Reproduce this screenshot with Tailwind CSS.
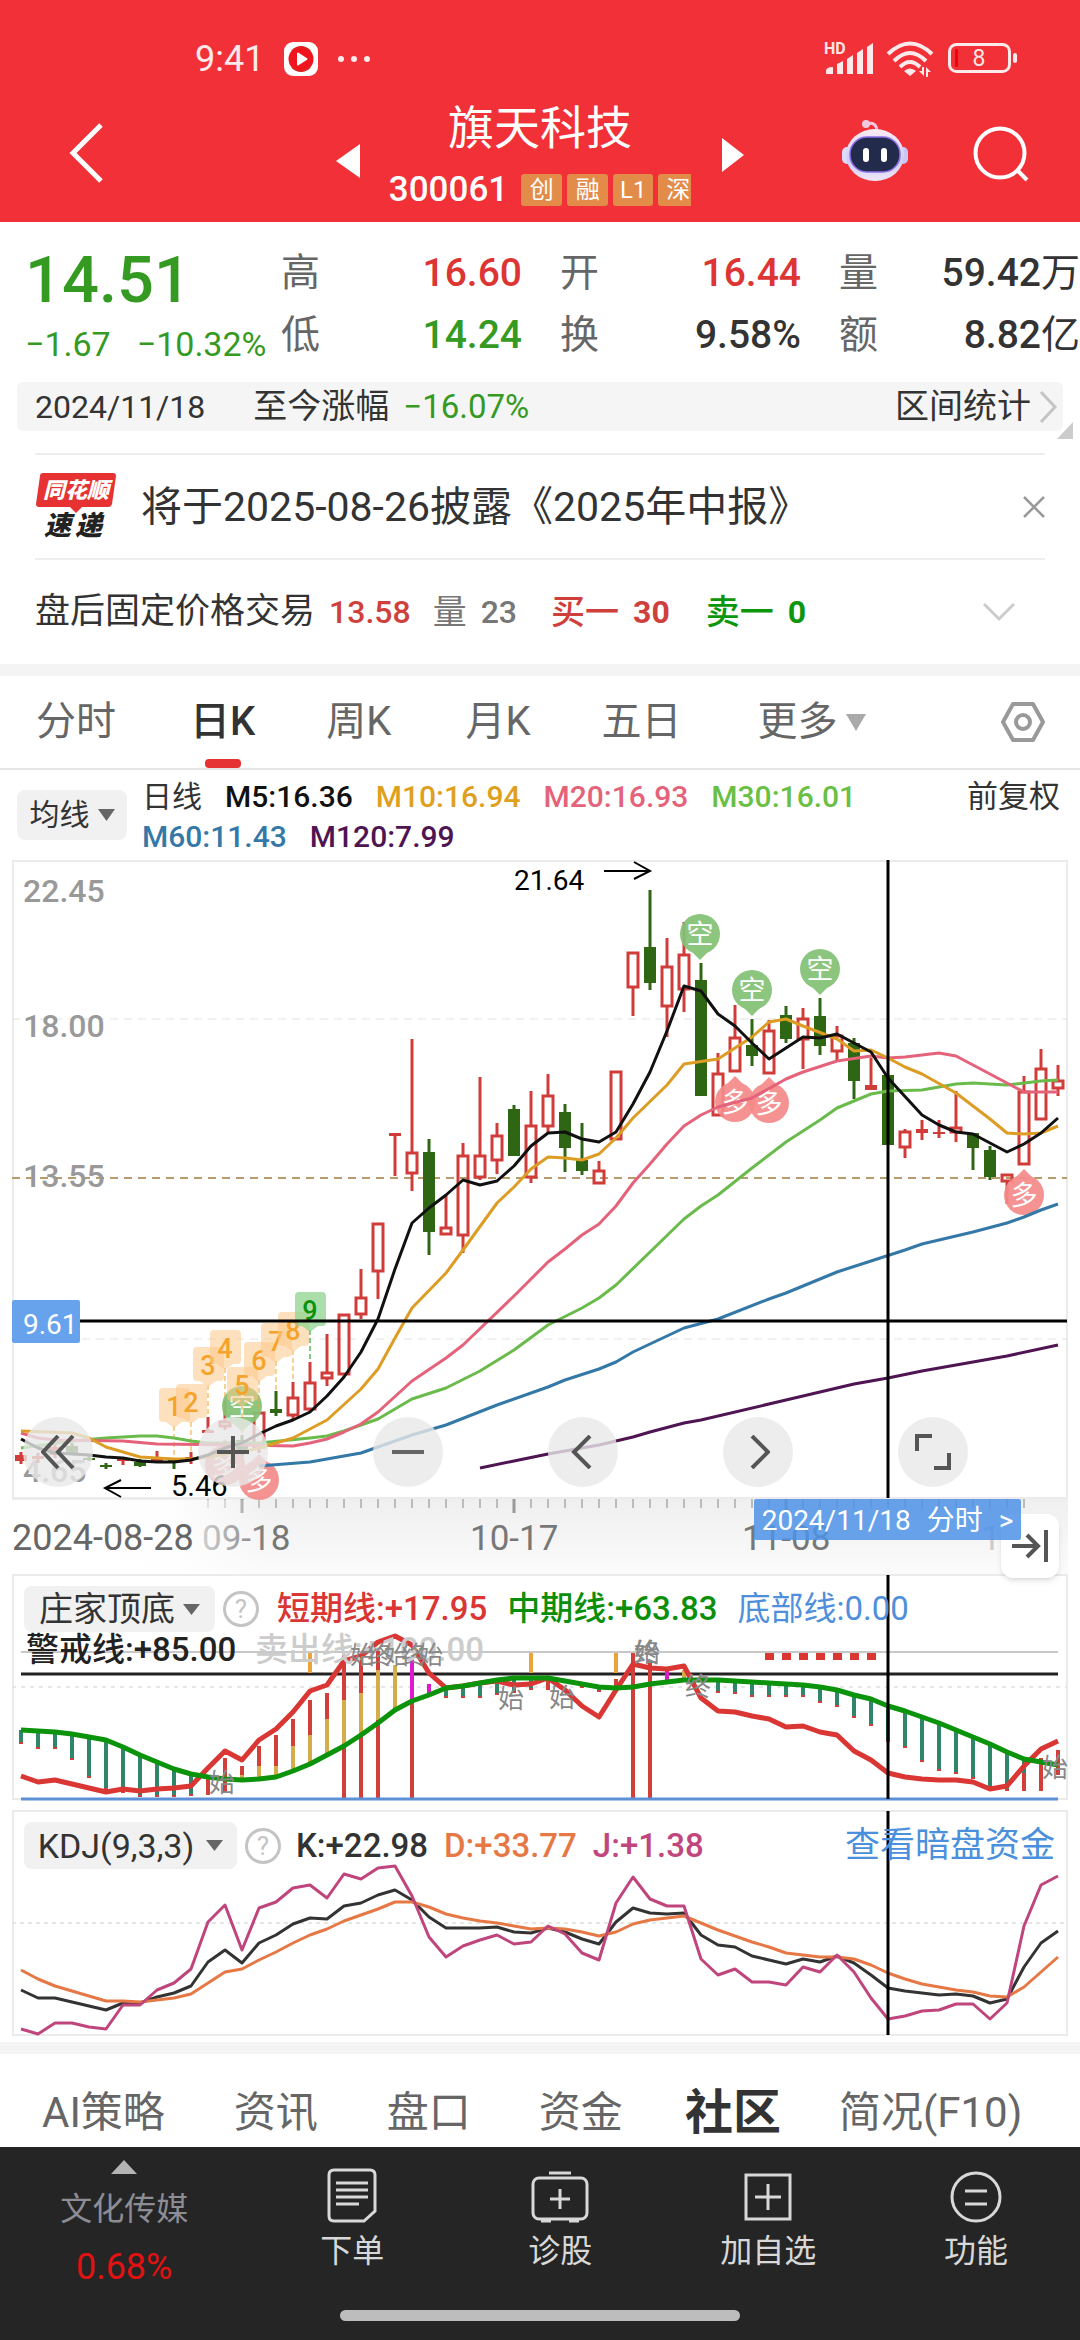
<!DOCTYPE html>
<html lang="zh-CN">
<head>
<meta charset="utf-8">
<meta name="viewport" content="width=device-width, initial-scale=1">
<title>旗天科技 300061</title>
<script src="https://cdn.jsdelivr.net/npm/@tailwindcss/browser@4"></script>
</head>
<body class="bg-white text-[#333] font-[Roboto,'Noto_Sans_CJK_SC',sans-serif] overflow-x-hidden">

<!-- Status bar and title -->
<header class="bg-[#f13037] text-white">
  <div class="h-[118px] pl-[195px] pr-[62px] flex items-center justify-between">
    <div class="flex items-center gap-5">
      <span class="text-[36px] leading-[40px] text-white/90">9:41</span>
      <svg width="34" height="34" viewBox="0 0 34 34"><rect width="34" height="34" rx="9" fill="#fff"/><circle cx="17" cy="17" r="12.500" fill="#f0141e"/><path d="M8 9 Q17 1 26 9 M26 25 Q17 33 8 25" fill="none" stroke="#d22" stroke-width="2"/><path d="M14 11.500 L22.500 17 L14 22.500 Z" fill="#fff" stroke="#fff" stroke-width="2" stroke-linejoin="round"/></svg>
      <svg width="32" height="8" viewBox="0 0 32 8" fill="#fff" fill-opacity=".9"><circle cx="3" cy="4" r="3"/><circle cx="16" cy="4" r="3"/><circle cx="29" cy="4" r="3"/></svg>
    </div>
    <svg width="194" height="38" viewBox="0 0 194 38" fill="#fff" fill-opacity=".9">
      <text x="0" y="14" font-size="16" font-weight="700">HD</text>
      <path d="M2 34 V31 Q2 27 9 27 V34 Z M13 34 V24 L19 21 V34 Z M23 34 V19 L29 15 V34 Z M33 34 V13 L39 9 V34 Z M43 34 V7 L49 3 V34 Z"/>
      <g fill="none" stroke="#fff" stroke-opacity=".9" stroke-width="4"><path d="M64 14 Q86 -7 108 14"/><path d="M70 21 Q86 5 102 21"/><path d="M76 27 Q86 17 96 27"/></g>
      <path d="M80 31 Q86 26 92 31 L86 36 Z M100 27 V36 L95 31 H98 V27 Z M102 37 V27 L107 32 H104 V37 Z"/>
      <rect x="125.500" y="4.500" width="60" height="27" rx="7" fill="none" stroke="#fff" stroke-opacity=".9" stroke-width="3"/>
      <rect x="131" y="9" width="3" height="18" rx="1" fill="#e00"/>
      <rect x="189" y="13" width="4" height="10" rx="2"/>
      <text x="155" y="26" font-size="23" text-anchor="middle">8</text>
    </svg>
  </div>
  <div class="h-[104px] pl-[68px] pr-[50px] grid grid-cols-[250px_1fr_268px] items-start">
    <div class="flex justify-between">
      <button aria-label="返回" class="mt-1"><svg width="36" height="62" viewBox="0 0 36 62" fill="none" stroke="#fff" stroke-width="5"><path d="M33 3 L5 31 L33 59"/></svg></button>
      <button aria-label="上一只" class="mt-5 mr-[-42px]"><svg width="24" height="34" viewBox="0 0 24 34" fill="#fff"><path d="M24 0 V34 L0 17 Z"/></svg></button>
    </div>
    <div class="flex flex-col items-center mt-[-18px]">
      <h1 class="text-[46px] leading-[56px]">旗天科技</h1>
      <div class="flex items-center h-[68px] gap-[5px] text-[24px]">
        <span class="text-[35px] font-medium mr-2">300061</span>
        <span class="bg-[#e38b48] rounded-[3px] w-[41px] h-8 leading-8 text-center">创</span>
        <span class="bg-[#e38b48] rounded-[3px] w-[41px] h-8 leading-8 text-center">融</span>
        <span class="bg-[#e38b48] rounded-[3px] w-[40px] h-8 leading-8 text-center">L1</span>
        <span class="bg-[#e38b48] rounded-l-[3px] w-[33px] h-8 leading-8 pl-2 overflow-hidden">深</span>
      </div>
    </div>
    <div class="flex justify-between">
      <button aria-label="下一只" class="mt-5 ml-[-40px] self-start"><svg width="22" height="34" viewBox="0 0 22 34" fill="#fff"><path d="M0 0 V34 L22 17 Z"/></svg></button>
      <div class="flex gap-[64px]">
      <button aria-label="智能助手"><svg width="66" height="62" viewBox="0 0 66 62">
        <defs><linearGradient id="rb" x1="0" y1="0" x2="0" y2="1"><stop offset="0" stop-color="#fbeaf2"/><stop offset=".6" stop-color="#cfcdf5"/><stop offset="1" stop-color="#efe6f6"/></linearGradient></defs>
        <path d="M24 5 Q35 2 35 13" fill="none" stroke="#f6c9dc" stroke-width="3"/><circle cx="24" cy="5" r="4" fill="#f3c9e0"/>
        <rect x="0" y="28" width="10" height="17" rx="5" fill="#dcdcfa"/><rect x="56" y="28" width="10" height="17" rx="5" fill="#c9c8f5"/>
        <ellipse cx="33" cy="36" rx="29" ry="26" fill="url(#rb)"/>
        <rect x="8" y="18" width="50" height="35" rx="17" fill="#232b4d" stroke="#8b6fe8" stroke-width="1.500"/>
        <rect x="21" y="29" width="6" height="14" rx="3" fill="#fff"/><rect x="39" y="29" width="6" height="14" rx="3" fill="#fff"/>
      </svg></button>
      <button aria-label="搜索" class="mt-2"><svg width="58" height="56" viewBox="0 0 58 56" fill="none" stroke="#fff" stroke-width="4"><circle cx="28" cy="27" r="24.500"/><path d="M45 44 L55 54"/></svg></button>
      </div>
    </div>
  </div>
</header>

<!-- Quote -->
<section class="flex pt-5 h-[160px]">
  <div class="w-[281px] shrink-0 pl-[25px] text-[#349a22]">
    <div class="text-[65px] leading-[76px] font-medium">14.51</div>
    <div class="flex gap-[26px] text-[34px] leading-[52px] whitespace-nowrap"><span>−1.67</span><span>−10.32%</span></div>
  </div>
  <dl class="flex-1 grid grid-cols-3 gap-x-[38px] text-[39px] leading-[62px] content-start whitespace-nowrap font-medium">
    <div class="flex justify-between"><dt class="text-[#666] font-normal">高</dt><dd class="text-[#dc3534]">16.60</dd></div>
    <div class="flex justify-between"><dt class="text-[#666] font-normal">开</dt><dd class="text-[#dc3534]">16.44</dd></div>
    <div class="flex justify-between"><dt class="text-[#666] font-normal">量</dt><dd>59.42<span class="font-normal">万</span></dd></div>
    <div class="flex justify-between"><dt class="text-[#666] font-normal">低</dt><dd class="text-[#349a22]">14.24</dd></div>
    <div class="flex justify-between"><dt class="text-[#666] font-normal">换</dt><dd>9.58%</dd></div>
    <div class="flex justify-between"><dt class="text-[#666] font-normal">额</dt><dd>8.82<span class="font-normal">亿</span></dd></div>
  </dl>
</section>

<div class="relative mx-[17px] h-[49px] bg-[#f5f5f5] rounded-md flex items-center px-[18px] text-[32px]">
  <span>2024/11/18</span>
  <span class="ml-12 text-[34px]">至今涨幅</span>
  <span class="ml-[14px] text-[33px] text-[#349a22]">−16.07%</span>
  <a href="#range" class="ml-auto text-[34px] mr-[-12px] flex items-center gap-2">区间统计<svg width="18" height="32" viewBox="0 0 18 32" fill="none" stroke="#c4c4c4" stroke-width="3"><path d="M2 1 L16 16 L2 31"/></svg></a>
  <svg class="absolute right-[-10px] bottom-[-8px]" width="16" height="17" viewBox="0 0 16 17"><path d="M16 0 V17 H0 Z" fill="#ccc"/></svg>
</div>

<!-- Notices -->
<section class="mt-[22px] px-[35px]">
  <div class="border-t-2 border-b-2 border-[#eee] h-[107px] flex items-center">
    <svg width="82" height="72" viewBox="0 0 82 72" font-style="italic" font-weight="900">
      <path d="M8 2 H78 Q81 2 81 5 L77 33 Q76 36 73 36 H47 L41 42 L35 36 H4 Q1 36 1 33 L5 5 Q5 2 8 2 Z" fill="#e63232"/>
      <text x="41" y="27" font-size="22" text-anchor="middle" fill="#fff">同花顺</text>
      <text x="9" y="64" font-size="27" fill="#222">速</text><text x="40" y="64" font-size="27" fill="#222">递</text>
    </svg>
    <p class="ml-[24px] text-[41px] leading-[50px]">将于2025-08-26披露《2025年中报》</p>
    <button aria-label="关闭" class="ml-auto"><svg width="22" height="22" viewBox="0 0 22 22" stroke="#999" stroke-width="2.500"><path d="M1 1 L21 21 M21 1 L1 21"/></svg></button>
  </div>
  <div class="h-[104px] flex items-center text-[34px] pr-[30px]">
    <span class="text-[35px]">盘后固定价格交易</span>
    <span class="ml-[14px] text-[32px] font-medium text-[#cf3f3c]">13.58</span>
    <span class="ml-[22px] text-[#777]">量</span><span class="ml-[14px] text-[32px] font-medium text-[#777]">23</span>
    <span class="ml-[34px] font-medium text-[#cf3f3c]">买一</span><span class="ml-[14px] text-[32px] font-bold text-[#cf3f3c]">30</span>
    <span class="ml-[36px] font-medium text-[#0c960c]">卖一</span><span class="ml-[14px] text-[32px] font-bold text-[#0c960c]">0</span>
    <button aria-label="展开" class="ml-auto"><svg width="32" height="20" viewBox="0 0 32 20" fill="none" stroke="#ccc" stroke-width="3"><path d="M1 2 L16 17 L31 2"/></svg></button>
  </div>
</section>
<div class="h-3 bg-[#f4f4f4]"></div>

<!-- Period tabs -->
<nav class="h-[94px] border-b-2 border-[#e6e6e6] pl-[36px] pr-[34px] flex items-center text-[40px] text-[#666] whitespace-nowrap">
  <button>分时</button>
  <button class="relative ml-[74px] h-full text-[#333] font-medium">日K<span class="absolute bottom-0 left-1/2 -translate-x-1/2 w-9 h-[9px] rounded bg-[#e63232]"></span></button>
  <button class="ml-[71px]">周K</button>
  <button class="ml-[74px]">月K</button>
  <button class="ml-[71px]">五日</button>
  <button class="ml-[76px] flex items-center gap-2">更多<svg width="20" height="17" viewBox="0 0 20 17"><path d="M0 0 H20 L10 17 Z" fill="#aaa"/></svg></button>
  <button aria-label="设置" class="ml-auto"><svg width="46" height="42" viewBox="0 0 46 42" fill="none" stroke="#999" stroke-width="4" stroke-linejoin="round"><path d="M13 3 H33 L43 21 L33 39 H13 L3 21 Z"/><circle cx="23" cy="21" r="7"/></svg></button>
</nav>

<!-- Moving averages -->
<section class="flex pl-[17px] pr-[20px] pt-[7px] h-[88px] text-[30px] leading-[40px] font-medium">
  <button class="mt-[13px] w-[110px] h-[50px] rounded-lg bg-[#f1f1f1] flex items-center justify-center gap-2 font-normal">均线<svg width="17" height="12" viewBox="0 0 17 12"><path d="M0 0 H17 L8.500 12 Z" fill="#666"/></svg></button>
  <div class="ml-[15px] flex-1 flex flex-wrap gap-x-[23px] content-start whitespace-nowrap">
    <span class="font-normal">日线</span><span class="text-[#111]">M5:16.36</span><span class="text-[#dfa01e]">M10:16.94</span><span class="text-[#e4637a]">M20:16.93</span><span class="text-[#6abf45]">M30:16.01</span>
    <div class="w-full flex gap-[23px]"><span class="text-[#3478a8]">M60:11.43</span><span class="text-[#4e1552]">M120:7.99</span></div>
  </div>
  <span class="font-normal text-[31px]">前复权</span>
</section>

<!-- Candlestick chart -->
<section class="relative">
  <svg id="candles" class="block w-full" viewBox="0 858 1080 716"></svg>
  <div class="absolute left-[23px] bottom-[87px] flex gap-[105px]">
    <button aria-label="最左" class="w-[70px] h-[70px] rounded-full bg-[#e8e8e8]/80 grid place-items-center"><svg width="34" height="34" viewBox="0 0 34 34" fill="none" stroke="#555" stroke-width="4"><path d="M17 1 L2 17 L17 33 M32 1 L17 17 L32 33"/></svg></button>
    <button aria-label="放大" class="w-[70px] h-[70px] rounded-full bg-[#e8e8e8]/80 grid place-items-center"><svg width="32" height="32" viewBox="0 0 32 32" stroke="#555" stroke-width="4"><path d="M0 16 H32 M16 0 V32"/></svg></button>
    <button aria-label="缩小" class="w-[70px] h-[70px] rounded-full bg-[#e8e8e8]/80 grid place-items-center"><svg width="32" height="4" viewBox="0 0 32 4"><path d="M0 0 H32 V4 H0 Z" fill="#666"/></svg></button>
    <button aria-label="左移" class="w-[70px] h-[70px] rounded-full bg-[#e8e8e8]/80 grid place-items-center"><svg width="24" height="34" viewBox="0 0 24 34" fill="none" stroke="#555" stroke-width="4"><path d="M19 1 L3 17 L19 33"/></svg></button>
    <button aria-label="右移" class="w-[70px] h-[70px] rounded-full bg-[#e8e8e8]/80 grid place-items-center"><svg width="24" height="34" viewBox="0 0 24 34" fill="none" stroke="#555" stroke-width="4"><path d="M6 1 L22 17 L6 33"/></svg></button>
    <button aria-label="全屏" class="w-[70px] h-[70px] rounded-full bg-[#e8e8e8]/80 grid place-items-center"><svg width="36" height="36" viewBox="0 0 36 36" fill="none" stroke="#555" stroke-width="4"><path d="M2 17 V2 H17 M34 19 V34 H19"/></svg></button>
  </div>
  <button aria-label="最新" class="absolute right-[21px] bottom-[-4px] w-[58px] h-[64px] rounded-xl bg-white shadow-md grid place-items-center z-10"><svg width="36" height="32" viewBox="0 0 36 32" fill="none" stroke="#555" stroke-width="4"><path d="M0 16 H25 M15 5 L26 16 L15 27 M34 0 V32"/></svg></button>
  <a href="#minute" class="absolute right-[59px] bottom-[34px] w-[267px] h-[41px] bg-[#4c92e8]/85 rounded-xs text-white text-[28px] leading-[44px] z-20 flex justify-center gap-4 whitespace-nowrap"><span>2024/11/18</span><span>分时</span><span>&gt;</span></a>
</section>

<!-- Bottom/top indicator -->
<section class="relative">
  <svg id="trend" class="block w-full" viewBox="0 1574 1080 236"></svg>
  <div class="absolute inset-x-0 top-3 pl-6 flex items-center text-[33px] leading-[46px] whitespace-nowrap">
    <button class="w-[191px] h-[46px] rounded-lg bg-[#f1f1f1] flex items-center justify-center gap-2 text-[34px]">庄家顶底<svg width="17" height="11" viewBox="0 0 17 11"><path d="M0 0 H17 L8.500 11 Z" fill="#666"/></svg></button>
    <button aria-label="说明" class="ml-2 w-9 h-9 rounded-full border-3 border-[#c4c4c4] text-[#c4c4c4] text-[26px] leading-[30px]">?</button>
    <span class="ml-[18px] text-[#d93634] font-medium">短期线:+17.95</span>
    <span class="ml-5 text-[#0b8f0b] font-medium">中期线:+63.83</span>
    <span class="ml-5 text-[#4f8fdb]">底部线:0.00</span>
  </div>
</section>

<!-- KDJ -->
<section class="relative">
  <svg id="kdj" class="block w-full" viewBox="0 1810 1080 232"></svg>
  <div class="absolute inset-x-0 top-3 pl-6 pr-[25px] flex items-center text-[34px] leading-[46px] whitespace-nowrap">
    <button class="w-[213px] h-[47px] rounded-lg bg-[#f1f1f1] flex items-center justify-center gap-3">KDJ(9,3,3)<svg width="17" height="11" viewBox="0 0 17 11"><path d="M0 0 H17 L8.500 11 Z" fill="#666"/></svg></button>
    <button aria-label="说明" class="ml-2 w-9 h-9 rounded-full border-3 border-[#c4c4c4] text-[#c4c4c4] text-[26px] leading-[30px]">?</button>
    <span class="ml-[15px] text-[#333] text-[33px] font-medium">K:+22.98</span>
    <span class="ml-4 text-[#e67845] text-[33px] font-medium">D:+33.77</span>
    <span class="ml-4 text-[#c1467d] text-[33px] font-medium">J:+1.38</span>
    <a href="#funds" class="ml-auto text-[#4a90dc] text-[35px]">查看暗盘资金</a>
  </div>
</section>
<div class="h-3 bg-[#f4f4f4]"></div>

<!-- Content tabs -->
<nav class="h-[93px] pt-6 pl-[42px] flex items-start text-[42px] leading-[70px] text-[#666] whitespace-nowrap">
  <a href="#ai">AI策略</a><a href="#news" class="ml-[69px]">资讯</a><a href="#pankou" class="ml-[69px]">盘口</a><a href="#funding" class="ml-[68px]">资金</a><a href="#club" class="ml-[62px] text-[48px] font-bold text-[#333]">社区</a><a href="#f10" class="ml-[58px]">简况(F10)</a>
</nav>

<!-- Bottom bar -->
<footer class="bg-[#252525] text-[#d8d8d8] h-[193px] relative grid grid-cols-[23fr_77fr] text-[32px] leading-[40px]">
  <a href="#sector" class="flex flex-col items-center pt-[13px]">
    <svg width="26" height="14" viewBox="0 0 26 14"><path d="M13 0 L26 14 H0 Z" fill="#b4b4b4"/></svg>
    <span class="mt-[15px] text-[#8d8d96]">文化传媒</span>
    <span class="mt-[18px] text-[36px] text-[#e01212]">0.68%</span>
  </a>
  <div class="grid grid-cols-4 pt-[20px]">
    <button class="flex flex-col items-center self-start gap-[8px]"><svg width="52" height="56" viewBox="0 0 52 56" fill="none" stroke="#d8d8d8" stroke-width="3"><path d="M8 3 H44 Q49 3 49 8 V44 L38 54 H8 Q3 54 3 49 V8 Q3 3 8 3 Z M10 16 H42 M10 23 H42 M10 30 H42 M10 37 H33"/></svg>下单</button>
    <button class="flex flex-col items-center self-start gap-[8px]"><svg width="60" height="56" viewBox="0 0 60 56" fill="none" stroke="#d8d8d8" stroke-width="3"><rect x="3" y="11" width="54" height="41" rx="6"/><path d="M19 6 H41 M20 32 H40 M30 22 V42 M11 54 H21 M39 54 H49"/></svg>诊股</button>
    <button class="flex flex-col items-center self-start gap-[8px]"><svg width="48" height="56" viewBox="0 0 48 56" fill="none" stroke="#d8d8d8" stroke-width="3"><rect x="2" y="8" width="44" height="44"/><path d="M11 30 H37 M24 17 V43"/></svg>加自选</button>
    <button class="flex flex-col items-center self-start gap-[8px]"><svg width="52" height="56" viewBox="0 0 52 56" fill="none" stroke="#d8d8d8" stroke-width="3"><circle cx="26" cy="30" r="24"/><path d="M15 24 H37 M15 37 H37"/></svg>功能</button>
  </div>
  <div class="absolute left-1/2 -translate-x-1/2 bottom-[19px] w-[400px] h-[11px] rounded-full bg-[#bdbdbd]"></div>
</footer>

<script>
const X = i => 21 + 17 * i;
const line = (pts, c, w) => `<polyline points="${pts.map(([i, y]) => X(i) + ',' + y).join(' ')}" fill="none" stroke="${c}" stroke-width="${w}" stroke-linejoin="round"/>`;
const seq = ys => ys.map((y, i) => [i, y]);
const seg = (x1, y1, x2, y2, c, w, d) => `<line x1="${x1}" y1="${y1}" x2="${x2}" y2="${y2}" stroke="${c}" stroke-width="${w}"${d ? ` stroke-dasharray="${d}"` : ''}/>`;
const text = (x, y, s, c, size, o) => `<text x="${x}" y="${y}" fill="${c}" font-size="${size}" ${o || ''}>${s}</text>`;
const frame = (y, h) => `<rect x="13" y="${y}" width="1054" height="${h}" fill="none" stroke="#ebebeb" stroke-width="2"/>`;
const RED = '#cf3c39', GREEN = '#2f6613';

// kind: h hollow rise, r solid rise, g fall; then body top, body bottom, wick top, wick bottom
const candles = [
['r',1455,1461,1452,1464],['r',1456,1459,1453,1463],['r',1447,1455,1445,1458],['g',1446,1453,1443,1453],['g',1458,1460,1455,1461],
['g',1465,1467,1463,1469],['r',1458,1461,1457,1465],['g',1462,1466,1459,1467],['r',1457,1461,1451,1463],['g',1460,1462,1460,1469],
['r',1457,1460,1452,1464],['r',1430,1433,1417,1432],['h',1421,1427,1400,1430],['g',1440,1451,1435,1463],['h',1412,1448,1412,1453],
['g',1409,1413,1391,1416],['h',1397,1416,1382,1419],['h',1382,1410,1362,1411],['h',1372,1379,1334,1386],['h',1314,1375,1314,1375],
['h',1297,1315,1269,1319],['h',1223,1272,1223,1299],['r',1133,1136,1134,1176],['h',1152,1174,1039,1191],['g',1152,1232,1139,1255],
['h',1227,1235,1195,1235],['h',1155,1236,1143,1253],['h',1155,1178,1077,1180],['h',1135,1161,1123,1174],['g',1109,1156,1105,1156],
['h',1125,1178,1091,1183],['h',1095,1127,1074,1133],['g',1112,1148,1104,1172],['g',1160,1171,1123,1175],['h',1170,1184,1161,1184],
['h',1071,1140,1071,1140],['h',952,988,952,1016],['g',947,983,890,990],['h',966,1007,938,1037],['h',954,990,922,1012],
['g',980,1096,963,1096],['h',1073,1116,1053,1116],['h',1037,1072,1005,1072],['g',1045,1056,1019,1066],['h',1030,1074,1020,1074],
['g',1015,1039,1006,1043],['h',1018,1040,1008,1069],['g',1016,1046,998,1055],['h',1035,1052,1026,1061],['g',1043,1081,1038,1099],
['r',1085,1090,1058,1090],['g',1075,1145,1075,1145],['h',1131,1148,1129,1158],['r',1129,1133,1120,1140],['r',1132,1134,1120,1138],
['h',1127,1133,1091,1142],['g',1133,1148,1133,1170],['g',1150,1177,1146,1180],['h',1174,1182,1174,1204],['h',1091,1165,1076,1165],
['h',1068,1120,1049,1120],['h',1080,1089,1065,1096]];
const ma5 = [[0,1439],[1,1448],[2,1453],[4,1455],[5,1457],[6,1458],[7,1461],[8,1462],[9,1462],[10,1460],[11,1455],[12,1448],[13,1443],[14,1434],[15,1426],[16,1420],[17,1412],[18,1396],[19,1377],[20,1352],[21,1319],[22,1269],[23,1223],[24,1208],[25,1195],[26,1180],[27,1185],[28,1181],[29,1166],[30,1146],[31,1133],[32,1132],[33,1139],[34,1142],[35,1132],[36,1104],[37,1072],[38,1031],[39,986],[40,991],[41,1014],[42,1026],[43,1043],[44,1059],[46,1037],[47,1038],[48,1034],[50,1052],[51,1078],[53,1115],[54,1125],[55,1132],[56,1134],[58,1152],[59,1144],[60,1133],[61,1118]];
const ma10 = [[0,1431],[3,1433],[4,1438],[5,1447],[7,1457],[9,1459],[10,1459],[11,1457],[13,1452],[14,1448],[15,1443],[16,1438],[18,1420],[20,1389],[21,1369],[22,1338],[23,1308],[25,1273],[26,1250],[28,1203],[29,1187],[30,1169],[31,1157],[32,1158],[33,1160],[34,1154],[35,1138],[36,1118],[38,1085],[39,1064],[41,1059],[43,1037],[44,1022],[45,1019],[46,1026],[48,1039],[49,1051],[50,1050],[51,1058],[52,1067],[53,1074],[55,1093],[57,1119],[58,1133],[59,1134],[60,1133],[61,1126]];
const ma20 = [[0,1433],[1,1438],[2,1440],[6,1441],[8,1444],[13,1445],[16,1446],[17,1443],[18,1439],[19,1432],[20,1424],[21,1412],[23,1381],[25,1358],[26,1345],[29,1296],[30,1279],[31,1262],[32,1249],[33,1235],[34,1224],[35,1206],[36,1183],[37,1164],[38,1144],[39,1126],[40,1115],[41,1107],[43,1098],[45,1079],[46,1072],[48,1061],[50,1056],[51,1058],[52,1057],[54,1053],[55,1056],[57,1074],[59,1092],[61,1092]];
const ma30 = [[0,1448],[3,1441],[5,1438],[7,1436],[8,1436],[9,1438],[10,1441],[11,1443],[14,1443],[17,1438],[18,1436],[19,1431],[21,1419],[23,1399],[25,1388],[27,1371],[29,1350],[31,1325],[33,1308],[34,1298],[35,1285],[37,1252],[39,1219],[40,1206],[41,1195],[43,1168],[45,1142],[47,1120],[48,1108],[50,1094],[51,1091],[53,1090],[55,1084],[56,1083],[58,1085],[60,1081],[61,1080]];
const ma60 = [[14,1466],[17,1462],[20,1453],[21,1447],[23,1435],[25,1425],[28,1405],[31,1387],[32,1380],[34,1369],[35,1362],[36,1352],[39,1328],[41,1319],[44,1299],[45,1293],[48,1272],[50,1261],[52,1250],[53,1244],[56,1232],[58,1223],[59,1217],[60,1210],[61,1204]];
const ma120 = [[27,1468],[29,1461],[31,1454],[33,1448],[34,1445],[35,1441],[36,1437],[37,1432],[39,1423],[40,1420],[45,1400],[49,1384],[51,1378],[53,1371],[58,1356],[61,1345]];

const pin = (x, y, up, s) => `<g fill="${up ? '#f58a8a' : '#84c275'}" opacity=".93"><circle cx="${x}" cy="${y}" r="20"/><path d="${up ? `M${x-9} ${y-17} L${x} ${y-26} L${x+9} ${y-17}` : `M${x-9} ${y+17} L${x} ${y+26} L${x+9} ${y+17}`} Z"/></g>` + text(x, y + 10, s, '#fff', 27, 'text-anchor="middle"');
let s = `<defs><linearGradient id="ax" x1="0" y1="0" x2="0" y2="1"><stop offset="0" stop-color="#efefef"/><stop offset="1" stop-color="#fbfbfb"/></linearGradient><linearGradient id="fade"><stop offset="0" stop-color="#fff"/><stop offset=".65" stop-color="#fff" stop-opacity=".9"/><stop offset="1" stop-color="#fff" stop-opacity="0"/></linearGradient></defs>`;
s += `<rect x="12" y="1498" width="1056" height="76" fill="url(#ax)"/>` + frame(861, 637);
s += seg(12,1019,1067,1019,'#e2e2e2',1,'8 6') + seg(12,1178,1067,1178,'#b89b6a',2,'8 6') + seg(12,1339,1067,1339,'#e2e2e2',1,'8 6');
[['22.45',902],['18.00',1037],['13.55',1187],['4.65',1482]].forEach(([t, y]) => s += text(23, y, t, '#999', 32, 'font-weight="500"'));
candles.forEach(([k, t, b, wt, wb], i) => {
  const x = X(i), c = k === 'g' ? GREEN : RED;
  s += seg(x, wt, x, k === 'h' ? t : wb, c, 3);
  if (k === 'h') s += seg(x, b, x, wb, c, 3) + `<rect x="${x - 5}" y="${t + 1}" width="10" height="${b - t - 2}" fill="none" stroke="${c}" stroke-width="3"/>`;
  else s += `<rect x="${x - 6}" y="${t}" width="12" height="${b - t}" fill="${c}"/>`;
});
s += pin(242,1406,0,'空') + pin(225,1465,1,'多') + pin(259,1480,1,'多') + pin(700,934,0,'空') + pin(752,990,0,'空') + pin(820,969,0,'空') + pin(735,1102,1,'多') + pin(769,1103,1,'多') + pin(1024,1195,1,'多');
[[9,1388,1460],[10,1384,1452],[11,1347,1417],[12,1330,1400],[13,1367,1435],[14,1342,1412],[15,1323,1391],[16,1312,1382],[17,1292,1362]].forEach(([i, y, e], n) => {
  const g = n === 8, x = X(i), c = g ? '#0c930c' : '#f5a32a';
  s += seg(x, y + 38, x, e, c, 1, '5 3') + `<g fill="${g ? '#8fd48f' : '#fdc98a'}" opacity="${g ? .75 : .55}"><rect x="${x - 15}" y="${y}" width="31" height="34" rx="4"/><path d="M${x-8} ${y+34} H${x+8} L${x} ${y+40} Z"/></g>` + text(x, y + 28, n + 1, c, 27, 'text-anchor="middle" font-weight="500"');
});
s += line(ma120,'#4e1552',3) + line(ma60,'#3478a8',3) + line(ma30,'#6abb4b',3) + line(ma20,'#e4637a',3) + line(ma10,'#dd9d24',3) + line(ma5,'#111',3);
s += text(514,890,'21.64','#000',28) + `<path d="M604 871 H650 M634 862 L650 871 L634 879 M151 1488 H105 M121 1480 L105 1488 L121 1497" fill="none" stroke="#000" stroke-width="2"/>` + text(171,1496,'5.46','#000',29);
s += seg(12,1321,1067,1321,'#000',3) + seg(888,860,888,1498,'#000',3);
s += `<rect x="12" y="1300" width="68" height="43" rx="2" fill="#67a3ec"/>` + text(23,1334,'9.61','#fff',28);
for (let i = 11; i < 60; i++) { const m = (i - 13) % 16 === 0; s += seg(X(i), 1499, X(i), m ? 1513 : 1508, m ? '#999' : '#bbb', m ? 3 : 2); }
const d = 'font-weight="400"';
s += text(202,1550,'09-18','#777',35,d) + text(470,1550,'10-17','#777',35,d) + text(742,1550,'11-08','#777',35,d) + text(981,1550,'12','#ccc',35,d);
s += `<rect x="0" y="1500" width="270" height="74" fill="url(#fade)"/>` + text(12,1550,'2024-08-28','#666',36,d);
document.getElementById('candles').innerHTML = s;

const short = seq([1776,1782,1780,1784,1788,1792,1789,1791,1789,1788,1786,1768,1751,1760,1740,1729,1712,1691,1685,1661,1656,1642,1636,1645,1673,1688,1686,1683,1681,1685,1684,1678,1690,1706,1717,1690,1664,1668,1669,1666,1698,1711,1712,1716,1719,1727,1726,1732,1735,1751,1760,1773,1777,1779,1780,1780,1782,1789,1786,1766,1749,1741]);
const mid = seq([1730,1731,1732,1734,1737,1740,1747,1755,1762,1769,1774,1777,1779,1780,1779,1777,1771,1764,1755,1746,1735,1723,1710,1701,1695,1688,1686,1683,1680,1678,1678,1678,1681,1684,1687,1688,1687,1684,1682,1680,1680,1680,1681,1682,1683,1684,1685,1687,1690,1695,1699,1706,1711,1717,1723,1730,1737,1744,1752,1759,1762,1765]);
const down = {0:1744,1:1749,2:1749,3:1760,4:1778,5:1790,6:1793,7:1797,8:1797,9:1797,10:1796,25:1698,26:1698,27:1698,28:1695,29:1693,30:1690,33:1688,34:1692,42:1694,41:1693,43:1697,44:1697,45:1697,46:1697,47:1703,48:1707,49:1718,50:1726,51:1742,52:1748,53:1762,54:1771,55:1774,56:1779,57:1788,58:1791,59:1775};
const R = '#d23f3b', Y = '#d5ac4a', O = '#eba43a', M = '#dd1ad0';
const bars = [[11,1777,1795,R],[12,1758,1793,R],[13,1766,1775,R],[13,1775,1779,Y],[14,1746,1766,R],[14,1766,1778,Y],[15,1735,1766,R],[15,1766,1776,Y],[16,1719,1746,R],[16,1746,1771,Y],[17,1653,1673,O],[17,1700,1735,R],[17,1735,1764,Y],[18,1693,1719,R],[18,1719,1754,Y],[19,1655,1700,R],[19,1700,1744,Y],[19,1744,1799,R],[20,1655,1693,R],[20,1693,1735,Y],[20,1735,1799,R],[21,1650,1670,R],[21,1670,1720,Y],[21,1720,1799,R],[22,1665,1708,Y],[23,1660,1700,M],[23,1700,1799,R],[24,1684,1695,M],[30,1653,1673,O],[31,1680,1690,R],[35,1653,1673,O],[35,1679,1690,R],[36,1653,1799,R],[37,1660,1799,R],[38,1671,1680,M],[39,1670,1680,Y],[59,1775,1791,R],[60,1758,1791,R],[61,1750,1775,R]];
let t = frame(1575, 224) + seg(12,1687,1067,1687,'#e6e6e6',2,'4 5') + seg(21,1652,1058,1652,'#c8c8c8',2) + seg(21,1674,1058,1674,'#222',3);
for (const i in down) t += seg(X(+i), mid[i][1], X(+i), down[i], '#2f866b', 4) + seg(X(+i), down[i] - 2, X(+i), down[i], R, 4);
bars.forEach(([i, a, b, c]) => t += seg(X(i), a, X(i), b, c, 4));
for (let i = 44; i < 51; i++) t += `<rect x="${X(i) - 4}" y="1653" width="9" height="7" fill="#d93634"/>`;
t += line(short,'#d93634',5) + line(mid,'#0b930b',5);
t += text(26,1661,'警戒线:+85.00','#222',33,'font-weight="500"') + text(255,1661,'卖出线:+100.00','#ccc',33,'font-weight="500"');
[[209,1792,'始'],[498,1708,'始'],[549,1707,'始'],[1042,1777,'始'],[685,1696,'终'],[634,1662,'始'],[634,1662,'终']].forEach(([x, y, c]) => t += text(x, y, c, '#888', 26));
for (let i = 19; i < 24; i++) t += text(X(i) + 6, 1664, i % 2 ? '始' : '终', '#888', 25);
t += seg(21,1799,1058,1799,'#5b8fd6',3) + seg(888,1575,888,1799,'#000',3);
document.getElementById('trend').innerHTML = t;

const K = [1990,1998,1998,2002,2006,2010,2003,2003,1997,1993,1986,1962,1950,1963,1943,1935,1924,1918,1919,1906,1903,1895,1890,1900,1917,1928,1928,1928,1927,1932,1933,1928,1932,1939,1944,1922,1908,1913,1914,1913,1935,1945,1947,1956,1960,1964,1959,1962,1956,1963,1975,1988,1991,1993,1995,1994,1996,2003,1999,1967,1943,1931];
const D = [1970,1979,1986,1991,1996,2001,2001,2002,2000,1998,1994,1983,1972,1969,1960,1952,1943,1935,1929,1921,1915,1909,1902,1902,1907,1914,1918,1921,1923,1926,1929,1928,1929,1932,1936,1932,1924,1920,1918,1916,1923,1930,1936,1942,1947,1953,1955,1957,1957,1959,1965,1973,1979,1984,1987,1990,1992,1996,1997,1987,1972,1957];
const J = [2029,2034,2023,2023,2027,2029,2005,2005,1990,1983,1969,1922,1905,1950,1908,1902,1888,1885,1898,1874,1879,1868,1866,1896,1937,1957,1946,1940,1935,1944,1942,1926,1934,1953,1960,1903,1877,1899,1906,1906,1959,1975,1969,1982,1982,1985,1967,1972,1955,1972,1998,2019,2016,2011,2010,2004,2004,2019,2003,1926,1885,1876];
document.getElementById('kdj').innerHTML = frame(1811, 224) + seg(12,1923,1067,1923,'#e6e6e6',2,'4 4') + line(seq(K),'#333',3) + line(seq(D),'#e67845',3) + line(seq(J),'#bf457c',3) + seg(888,1811,888,2035,'#000',3);
</script>
</body>
</html>
